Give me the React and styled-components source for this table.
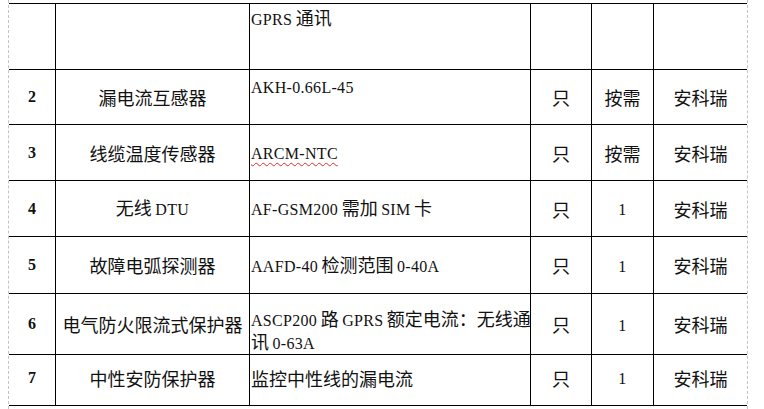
import React from "react";
import styled, { createGlobalStyle, css } from "styled-components";

const Global = createGlobalStyle`
  html, body { margin: 0; padding: 0; background: #ffffff; }
  body { font-family: "Noto Sans CJK SC", "Liberation Serif", serif; color: #111; }
`;

const Page = styled.div`
  box-sizing: border-box;
  width: 740px;
  height: 409px;
  margin-left: 8px;
  padding-top: 3px;
  border-left: 1px dashed #c4c4c4;
  border-right: 1px dashed #c4c4c4;
`;

const Table = styled.div`
  border-top: 1px solid #000;
`;

const Row = styled.div`
  display: grid;
  grid-template-columns: 47px 194px 281px 61px 62px 93px;
  height: ${(p) => p.$h}px;
`;

const Cell = styled.div`
  box-sizing: border-box;
  display: flex;
  border-bottom: 1px solid #000;
  border-right: 1px solid #000;
  &:last-child { border-right: none; }
  align-items: ${(p) => (p.$top != null ? "flex-start" : "center")};
  justify-content: ${(p) => (p.$left ? "flex-start" : "center")};
  padding-top: ${(p) => (p.$top != null ? p.$top : 0)}px;
  padding-left: ${(p) => (p.$left ? 1 : 0)}px;
`;

const Num = styled.span`
  font-family: "Liberation Serif", serif;
  font-weight: 700;
  font-size: 16px;
  line-height: 20px;
`;

const Text = styled.div`
  font-size: 18px;
  line-height: 20px;
  white-space: nowrap;
`;

const Han = styled.span`
  font-family: "Noto Sans CJK SC", sans-serif;
  font-size: 18px;
`;

const Latin = styled.span`
  font-family: "Liberation Serif", serif;
  font-size: 16px;
  letter-spacing: 0.3px;
  margin: 0 3.5px;
  &:first-child { margin-left: 0; }
  &:last-child { margin-right: 0; }
  ${(p) =>
    p.$wavy &&
    css`
      text-decoration: underline wavy #e0302a;
      text-decoration-thickness: 1px;
      text-underline-offset: 3px;
    `}
`;

function Rich({ line, wavy }) {
  const parts = line.split(/([\x21-\x7e]+)/).filter((s) => s.length);
  return parts.map((s, i) =>
    /^[\x21-\x7e]+$/.test(s) ? (
      <Latin key={i} $wavy={wavy}>{s}</Latin>
    ) : (
      <Han key={i}>{s}</Han>
    )
  );
}

function Lines({ lines, wavy }) {
  return (
    <Text>
      {lines.map((l, i) => (
        <React.Fragment key={i}>
          {i > 0 && <br />}
          <Rich line={l} wavy={wavy} />
        </React.Fragment>
      ))}
    </Text>
  );
}

const rows = [
  { h: 66, num: "", name: "", spec: ["GPRS通讯"], specTop: 3, unit: "", qty: "", brand: "" },
  { h: 55, num: "2", name: "漏电流互感器", spec: ["AKH-0.66L-45"], specTop: 5, unit: "只", qty: "按需", brand: "安科瑞" },
  { h: 56, num: "3", name: "线缆温度传感器", spec: ["ARCM-NTC"], wavy: true, unit: "只", qty: "按需", brand: "安科瑞" },
  { h: 56, num: "4", name: "无线DTU", spec: ["AF-GSM200需加SIM卡"], unit: "只", qty: "1", brand: "安科瑞" },
  { h: 57, num: "5", name: "故障电弧探测器", spec: ["AAFD-40检测范围0-40A"], unit: "只", qty: "1", brand: "安科瑞" },
  { h: 56, num: "6", name: "电气防火限流式保护器", spec: ["ASCP200路GPRS额定电流：无线通", "讯0-63A"], specTop: 14, unit: "只", qty: "1", brand: "安科瑞" },
  { h: 56, num: "7", name: "中性安防保护器", spec: ["监控中性线的漏电流"], unit: "只", qty: "1", brand: "安科瑞" },
];

export default function App() {
  return (
    <>
      <Global />
      <Page>
        <Table>
          {rows.map((r, i) => (
            <Row key={i} $h={r.h}>
              <Cell>{r.num && <Num>{r.num}</Num>}</Cell>
              <Cell>{r.name && <Lines lines={[r.name]} />}</Cell>
              <Cell $left $top={r.specTop}>
                <Lines lines={r.spec} wavy={r.wavy} />
              </Cell>
              <Cell>{r.unit && <Lines lines={[r.unit]} />}</Cell>
              <Cell>{r.qty && <Lines lines={[r.qty]} />}</Cell>
              <Cell>{r.brand && <Lines lines={[r.brand]} />}</Cell>
            </Row>
          ))}
        </Table>
      </Page>
    </>
  );
}
